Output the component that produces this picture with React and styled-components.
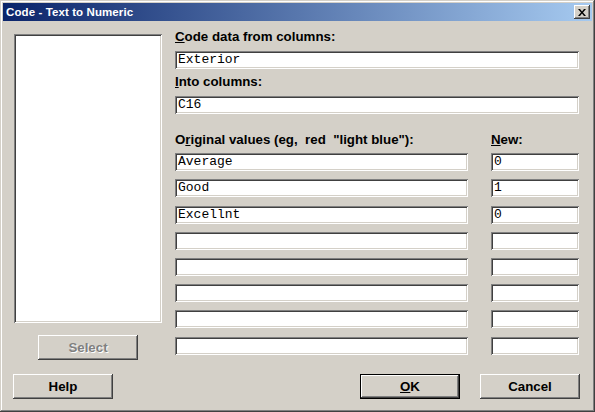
import React from "react"
import styled, { createGlobalStyle } from "styled-components"

const GlobalStyle = createGlobalStyle`
  html, body {
    margin: 0;
    padding: 0;
    background: #d4d0c8;
  }
  * {
    box-sizing: border-box;
  }
`

const raised = `
  box-shadow: inset -1px -1px #404040, inset 1px 1px #ffffff,
    inset -2px -2px #808080, inset 2px 2px #d4d0c8;
`

const sunken = `
  box-shadow: inset 1px 1px #808080, inset -1px -1px #ffffff,
    inset 2px 2px #404040, inset -2px -2px #d4d0c8;
`

const originals = ["Average", "Good", "Excellnt", "", "", "", "", ""]
const news = ["0", "1", "0", "", "", "", "", ""]

function App() {
  return (
    <>
      <GlobalStyle />
      <Window>
        <TitleBar>
          <Title>Code - Text to Numeric</Title>
          <CloseButton>
            <svg width="8" height="7" viewBox="0 0 8 7">
              <path
                d="M0 0h2l2 2.5L6 0h2L5 3.5 8 7H6L4 4.5 2 7H0l3-3.5z"
                fill="#000"
              />
            </svg>
          </CloseButton>
        </TitleBar>
        <Body>
          <LeftCol>
            <ListBox />
            <Button $w={100} disabled>
              Select
            </Button>
          </LeftCol>
          <RightCol>
            <Label>
              <u>C</u>ode data from columns:
            </Label>
            <Field $mt={6}>Exterior</Field>
            <Label $mt={5}>
              <u>I</u>nto columns:
            </Label>
            <Field $mt={6}>C16</Field>
            <ValuesGrid>
              <Label>
                O<u>r</u>iginal values (eg,&nbsp; red&nbsp; "light blue"):
              </Label>
              <Label>
                <u>N</u>ew:
              </Label>
              {originals.map((v, i) => (
                <React.Fragment key={i}>
                  <Field $mt={i === 2 || i === 7 ? 1 : 0}>{v}</Field>
                  <Field $mt={i === 2 || i === 7 ? 1 : 0}>{news[i]}</Field>
                </React.Fragment>
              ))}
            </ValuesGrid>
          </RightCol>
        </Body>
        <Footer>
          <Button $w={100}>Help</Button>
          <Spacer />
          <Button $w={100} $default>
            <u>O</u>K
          </Button>
          <Button $w={100}>Cancel</Button>
        </Footer>
      </Window>
    </>
  )
}

export default App

const Window = styled.div`
  width: 595px;
  height: 412px;
  padding: 3px;
  background: #d4d0c8;
  display: flex;
  flex-direction: column;
  box-shadow: inset -1px -1px #404040, inset 1px 1px #d4d0c8,
    inset -2px -2px #808080, inset 2px 2px #ffffff;
  font-family: "Liberation Sans", Arial, sans-serif;
`

const TitleBar = styled.div`
  flex: none;
  height: 18px;
  display: flex;
  align-items: center;
  justify-content: space-between;
  padding: 0 2px 0 3px;
  background: linear-gradient(90deg, #0a246a 0%, #a6caf0 100%);
`

const Title = styled.span`
  color: #ffffff;
  font-weight: bold;
  font-size: 11.5px;
  letter-spacing: 0.1px;
`

const CloseButton = styled.div`
  width: 16px;
  height: 14px;
  background: #d4d0c8;
  display: flex;
  align-items: center;
  justify-content: center;
  ${raised}
`

const Body = styled.div`
  flex: none;
  display: grid;
  grid-template-columns: 148px 404px;
  column-gap: 13px;
  padding: 8px 0 0 11px;
`

const LeftCol = styled.div`
  display: flex;
  flex-direction: column;
  align-items: center;
  gap: 12px;
  padding-top: 5px;
`

const ListBox = styled.div`
  width: 148px;
  height: 289px;
  background: #ffffff;
  ${sunken}
`

const RightCol = styled.div`
  display: flex;
  flex-direction: column;
`

const Label = styled.div`
  margin-top: ${(p) => p.$mt || 0}px;
  font-size: 13.3px;
  font-weight: bold;
  line-height: 16px;
  color: #000000;
  white-space: nowrap;
`

const Field = styled.div`
  margin-top: ${(p) => p.$mt || 0}px;
  height: 18px;
  padding: 0 3px;
  background: #ffffff;
  font-family: "Liberation Mono", "Courier New", monospace;
  font-size: 13px;
  line-height: 18px;
  color: #000000;
  white-space: nowrap;
  overflow: hidden;
  ${sunken}
`

const ValuesGrid = styled.div`
  margin-top: 18px;
  display: grid;
  grid-template-columns: 293px 88px;
  column-gap: 23px;
  row-gap: 8px;

  & > ${Label} {
    margin-bottom: -3px;
  }
`

const Button = styled.button`
  width: ${(p) => p.$w}px;
  height: 25px;
  padding: 0;
  border: ${(p) => (p.$default ? "1px solid #000000" : "none")};
  background: #d4d0c8;
  font-family: "Liberation Sans", Arial, sans-serif;
  font-size: 13.3px;
  font-weight: bold;
  color: #000000;
  ${raised}

  &:disabled {
    color: #808080;
    text-shadow: 1px 1px #ffffff;
  }
`

const Footer = styled.div`
  flex: none;
  display: flex;
  align-items: center;
  gap: 20px;
  margin-top: 14px;
  padding: 0 12px 0 10px;
`

const Spacer = styled.div`
  flex: 1;
`
